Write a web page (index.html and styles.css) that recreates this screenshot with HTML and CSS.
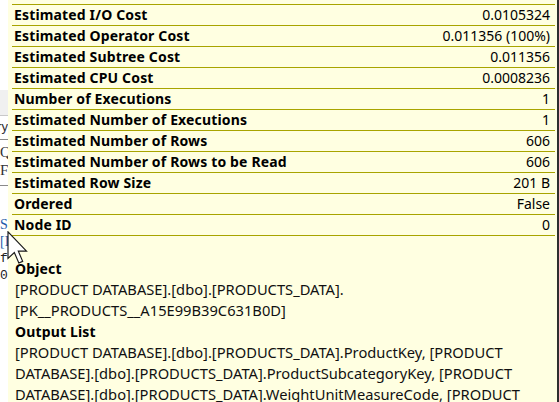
FILE: index.html
```html
<!DOCTYPE html>
<html>
<head>
<meta charset="utf-8">
<link rel="stylesheet" href="styles.css">
</head>
<body>
<div class="screen">
  <div class="behind">
    <div class="b-white"></div>
    <div class="b-bar"></div>
    <div class="b-line b-ry"><span>Directory</span></div>
    <div class="b-block">
      <div class="b-txt b-q"><span>Q</span></div>
      <div class="b-txt b-f"><span>F</span></div>
    </div>
    <div class="b-lower">
      <div class="b-code blue"><span>Sc</span></div>
      <div class="b-code blue"><span>[I</span></div>
      <div class="b-code"><span>f</span></div>
      <div class="b-code"><span>0</span></div>
    </div>
  </div>
  <div class="tip">
    <div class="rows">
      <div class="row"><span class="lbl">Estimated I/O Cost</span><span class="val">0.0105324</span></div>
      <div class="row"><span class="lbl">Estimated Operator Cost</span><span class="val">0.011356 (100%)</span></div>
      <div class="row"><span class="lbl">Estimated Subtree Cost</span><span class="val">0.011356</span></div>
      <div class="row"><span class="lbl">Estimated CPU Cost</span><span class="val">0.0008236</span></div>
      <div class="row"><span class="lbl">Number of Executions</span><span class="val">1</span></div>
      <div class="row"><span class="lbl">Estimated Number of Executions</span><span class="val">1</span></div>
      <div class="row"><span class="lbl">Estimated Number of Rows</span><span class="val">606</span></div>
      <div class="row"><span class="lbl">Estimated Number of Rows to be Read</span><span class="val">606</span></div>
      <div class="row"><span class="lbl">Estimated Row Size</span><span class="val">201 B</span></div>
      <div class="row"><span class="lbl">Ordered</span><span class="val">False</span></div>
      <div class="row last"><span class="lbl">Node ID</span><span class="val">0</span></div>
    </div>
    <div class="section">
      <div class="sec-title">Object</div>
      <div class="sec-text">[PRODUCT DATABASE].[dbo].[PRODUCTS_DATA].<br>[PK__PRODUCTS__A15E99B39C631B0D]</div>
      <div class="sec-title">Output List</div>
      <div class="sec-text">[PRODUCT DATABASE].[dbo].[PRODUCTS_DATA].ProductKey, [PRODUCT<br>DATABASE].[dbo].[PRODUCTS_DATA].ProductSubcategoryKey, [PRODUCT<br>DATABASE].[dbo].[PRODUCTS_DATA].WeightUnitMeasureCode, [PRODUCT</div>
    </div>
  </div>
  <svg class="cursor" width="22" height="35" viewBox="0 0 13 21">
    <path d="M0.5 0.5 L0.5 16.5 L4.3 12.9 L7 19.2 L9.3 18.2 L6.7 12.1 L11.6 12.1 Z" fill="#ffffff" stroke="#1a1a1a" stroke-width="0.7" stroke-linejoin="miter"/>
  </svg>
</div>
</body>
</html>
```

FILE: styles.css
```css
html, body {
  margin: 0;
  padding: 0;
  background: #ffffff;
  overflow: hidden;
}

.screen {
  position: relative;
  display: flex;
  width: 559px;
  height: 402px;
  overflow: hidden;
}

/* window behind the tooltip */
.behind {
  width: 8px;
  flex: none;
  display: flex;
  flex-direction: column;
  overflow: hidden;
  background: #ffffff;
  font-family: "Liberation Serif", serif;
  font-size: 14px;
  color: #333333;
}

.b-white {
  height: 90px;
  flex: none;
}

.b-bar {
  height: 25px;
  flex: none;
  background: #f0f0f0;
  border-bottom: 1px solid #c9c9c9;
}

.b-line,
.b-txt,
.b-code {
  display: flex;
  justify-content: flex-end;
  white-space: nowrap;
}

.b-ry {
  height: 23px;
  line-height: 22px;
  border-bottom: 1px solid #8a8a8a;
  font-family: "Liberation Sans", sans-serif;
  font-size: 13px;
}

.b-block {
  height: 46px;
  flex: none;
  border-bottom: 1px solid #8a8a8a;
  padding-top: 3px;
  box-sizing: border-box;
}

.b-txt {
  height: 18px;
  line-height: 18px;
  justify-content: flex-start;
  font-size: 15px;
}

.b-lower {
  padding-top: 30px;
}

.b-code {
  height: 17px;
  line-height: 17px;
  justify-content: flex-start;
  font-family: "Liberation Mono", monospace;
  font-size: 13px;
  color: #222222;
}

.b-code.blue {
  color: #1d5aa8;
  font-family: "Liberation Serif", serif;
  font-size: 14px;
}

/* tooltip */
.tip {
  flex: 1;
  background: #ffffe1;
  border-right: 2px solid #2e2e2e;
  padding: 4px 2px 0 4px;
  font-family: "Noto Sans", "Open Sans", sans-serif;
  font-size: 14px;
  color: #000000;
}

.row {
  display: flex;
  justify-content: space-between;
  height: 20px;
  line-height: 20px;
  border-top: 1px solid #a8a400;
  padding: 0 5px 0 2px;
  white-space: nowrap;
}

.row.last {
  border-bottom: 1px solid #a8a400;
}

.lbl {
  font-weight: 700;
  letter-spacing: 0.15px;
}

.val {
  font-weight: 400;
}

.section {
  padding: 22px 0 0 3px;
  line-height: 21px;
  white-space: nowrap;
}

.sec-title {
  font-weight: 700;
  letter-spacing: 0.15px;
}

.sec-text {
  font-size: 14.7px;
  color: #111111;
}

.cursor {
  position: absolute;
  left: 7px;
  top: 231px;
}
```
